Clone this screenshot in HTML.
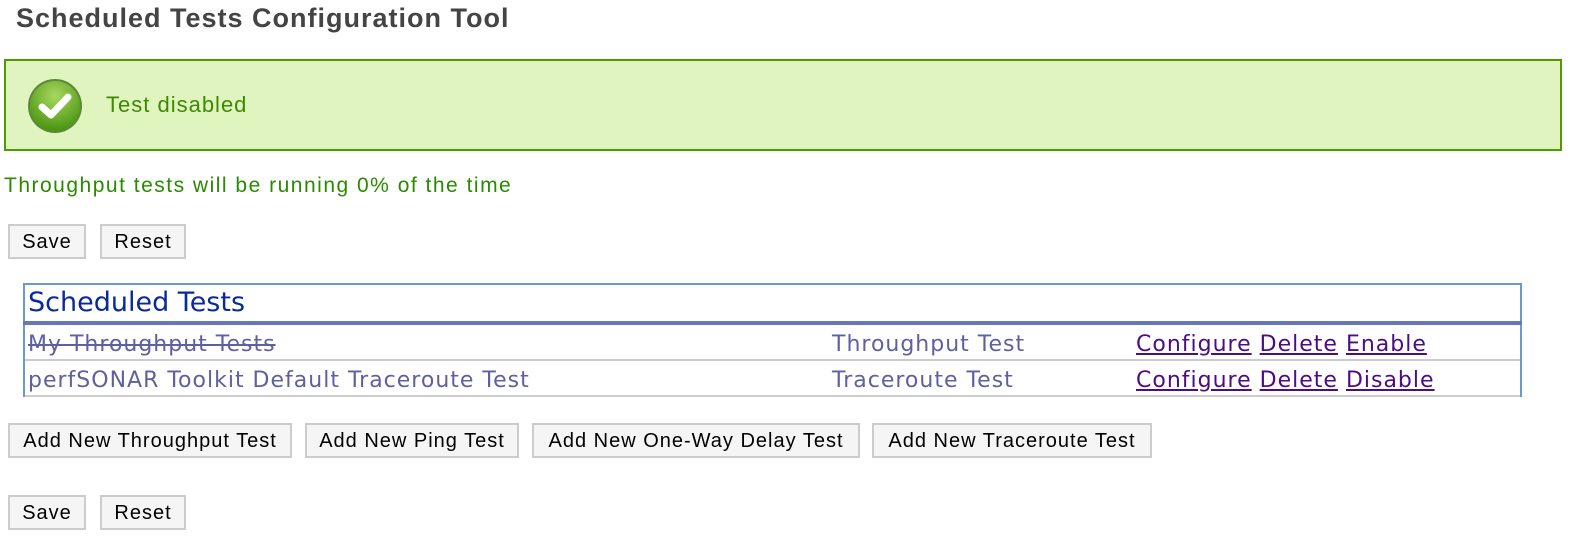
<!DOCTYPE html>
<html><head><style>
body{margin:0;background:#fff;font-family:"Liberation Sans",sans-serif;width:1575px;height:538px;position:relative;overflow:hidden}
.a{position:absolute}
h1{position:absolute;left:16px;top:3px;margin:0;font-size:27px;letter-spacing:1px;font-weight:bold;color:#444}
.msg{left:4px;top:59px;width:1554px;height:88px;background:#e0f4c0;border:2px solid #4f9a00}
.btn{position:absolute;height:31px;border:2px solid #ccc;background:#f5f5f5;font-size:20px;letter-spacing:1px;line-height:32px;text-align:center;color:#000;box-sizing:content-box}
.dv{font-family:"DejaVu Sans",sans-serif}
.row{position:absolute;font-size:22px;letter-spacing:1px;color:#6060a0;font-family:"DejaVu Sans",sans-serif}
.lk{color:#4b0c86;text-decoration:underline}
</style></head><body>
<h1>Scheduled Tests Configuration Tool</h1>
<div class="a msg"></div>
<svg class="a" style="left:26px;top:77px" width="58" height="58" viewBox="0 0 58 58">
<defs><radialGradient id="g" cx="50%" cy="30%" r="70%"><stop offset="0" stop-color="#a8d860"/><stop offset="1" stop-color="#4a9410"/></radialGradient></defs>
<circle cx="29" cy="29" r="27" fill="#5c8a3a"/><circle cx="29" cy="29" r="25" fill="url(#g)"/>
<path d="M16 30 L25 38 L42 20" stroke="#fff" stroke-width="7" fill="none" stroke-linecap="round" stroke-linejoin="round"/></svg>
<div class="a" style="left:106px;top:92px;font-size:22px;letter-spacing:1px;color:#3d8a00">Test disabled</div>
<div class="a" style="left:4px;top:174px;font-size:21px;letter-spacing:1.5px;color:#2a8a00">Throughput tests will be running 0% of the time</div>
<div class="btn" style="left:8px;top:224px;width:74px">Save</div>
<div class="btn" style="left:100px;top:224px;width:82px">Reset</div>
<div class="a" style="left:23px;top:283px;width:1495px;height:112px;border-left:2px solid #6a98d0;border-right:2px solid #6a98d0;border-top:2px solid #6a98d0"></div>
<div class="a dv" style="left:28px;top:287px;font-size:27px;color:#0a2a9a">Scheduled Tests</div>
<div class="a" style="left:23px;top:321px;width:1499px;height:4px;background:#6878b4"></div>
<div class="a" style="left:25px;top:359px;width:1495px;height:2px;background:#ccc"></div>
<div class="a" style="left:25px;top:395px;width:1495px;height:2px;background:#ccc"></div>
<div class="row" style="left:28px;top:332px;text-decoration:line-through">My Throughput Tests</div>
<div class="row" style="left:832px;top:332px">Throughput Test</div>
<div class="row" style="left:1136px;top:332px"><span class="lk">Configure</span> <span class="lk">Delete</span> <span class="lk">Enable</span></div>
<div class="row" style="left:28px;top:368px">perfSONAR Toolkit Default Traceroute Test</div>
<div class="row" style="left:832px;top:368px">Traceroute Test</div>
<div class="row" style="left:1136px;top:368px"><span class="lk">Configure</span> <span class="lk">Delete</span> <span class="lk">Disable</span></div>
<div class="btn" style="left:8px;top:423px;width:280px">Add New Throughput Test</div>
<div class="btn" style="left:305px;top:423px;width:210px">Add New Ping Test</div>
<div class="btn" style="left:532px;top:423px;width:324px">Add New One-Way Delay Test</div>
<div class="btn" style="left:872px;top:423px;width:276px">Add New Traceroute Test</div>
<div class="btn" style="left:8px;top:495px;width:74px">Save</div>
<div class="btn" style="left:100px;top:495px;width:82px">Reset</div>
</body></html>
